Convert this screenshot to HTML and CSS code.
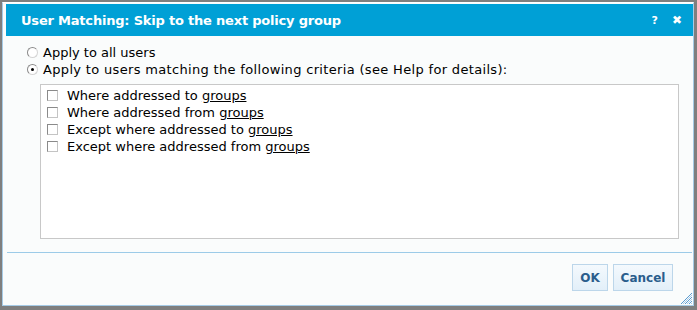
FILE: index.html
```html
<!DOCTYPE html>
<html>
<head>
<meta charset="utf-8">
<link rel="stylesheet" href="styles.css">
</head>
<body>
<div class="dialog">
  <div class="header">
    <span class="title">User Matching: Skip to the next policy group</span>
    <span class="tools"><span class="help">?</span><span class="close">&#x2716;</span></span>
  </div>
  <div class="content">
    <div class="radios">
      <div class="row"><span class="radio"></span><span>Apply to all users</span></div>
      <div class="row"><span class="radio checked"></span><span class="wide">Apply to users matching the following criteria (see Help for details):</span></div>
    </div>
    <div class="box">
      <div class="crow"><span class="check"></span><span>Where addressed to <u>groups</u></span></div>
      <div class="crow"><span class="check"></span><span>Where addressed from <u>groups</u></span></div>
      <div class="crow"><span class="check"></span><span>Except where addressed to <u>groups</u></span></div>
      <div class="crow"><span class="check"></span><span>Except where addressed from <u>groups</u></span></div>
    </div>
  </div>
  <div class="sep"></div>
  <div class="footer">
    <button class="btn ok">OK</button>
    <button class="btn cancel">Cancel</button>
  </div>
  <svg class="grip" width="13" height="13" viewBox="0 0 13 13">
    <path d="M12 1 L1 12 M12 5 L5 12 M12 9 L9 12" stroke="#5a9bd0" stroke-width="1" fill="none"/>
    <path d="M12 3 L3 12 M12 7 L7 12 M12 11 L11 12" stroke="#a9cbe8" stroke-width="1" fill="none"/>
  </svg>
</div>
</body>
</html>
```
FILE: styles.css
```css
html, body {
  margin: 0;
  padding: 0;
}
body {
  background: #7f7f7f;
  width: 697px;
  height: 310px;
  overflow: hidden;
  font-family: "DejaVu Sans", Verdana, sans-serif;
  font-size: 13px;
  color: #000;
}
.dialog {
  position: relative;
  box-sizing: border-box;
  margin: 2px 0 0 2px;
  width: 692px;
  height: 304px;
  border: 1px solid #a6cbe6;
  border-top-color: #ffffff;
  background: #fafcfc;
}
.header {
  margin: 1px 0 0 3px;
  height: 32px;
  background: #00a0d6;
  color: #fff;
  display: flex;
  align-items: center;
  justify-content: space-between;
  padding: 0 0 0 15px;
}
.title {
  font-weight: bold;
  font-size: 13px;
  letter-spacing: -0.2px;
}
.tools {
  display: flex;
  align-items: center;
  gap: 12px;
  padding-right: 11px;
  font-weight: bold;
}
.help {
  font-size: 11px;
  margin-right: 2px;
}
.close {
  font-size: 12px;
}
.content {
  padding: 8px 14px 0 24px;
}
.row {
  display: flex;
  align-items: center;
  height: 17px;
}
.wide {
  letter-spacing: 0.33px;
}
.radio {
  box-sizing: border-box;
  width: 11px;
  height: 11px;
  border-radius: 50%;
  border: 1px solid #8a8a8a;
  border-right-color: #d4d4d4;
  border-bottom-color: #d4d4d4;
  background: #fff;
  margin-right: 5px;
  margin-left: 0;
  position: relative;
}
.radio.checked::after {
  content: "";
  position: absolute;
  left: 3px;
  top: 3px;
  width: 3px;
  height: 3px;
  border-radius: 50%;
  background: #000;
}
.box {
  margin: 6px 0 0 13px;
  box-sizing: border-box;
  height: 155px;
  border: 1px solid #c8c8c8;
  background: #fff;
  padding: 2px 0 0 6px;
}
.crow {
  display: flex;
  align-items: center;
  height: 17px;
}
.check {
  box-sizing: border-box;
  width: 11px;
  height: 11px;
  border: 1px solid #8a8a8a;
  border-right-color: #c4c4c4;
  border-bottom-color: #c4c4c4;
  background: #fff;
  margin-right: 9px;
}
u {
  text-underline-offset: 1px;
}
.sep {
  margin: 13px 0 0 4px;
  height: 1px;
  background: #9ccbe8;
  margin-right: 1px;
}
.footer {
  display: flex;
  justify-content: flex-end;
  gap: 5px;
  padding: 11px 20px 0 0;
}
.btn {
  box-sizing: border-box;
  height: 27px;
  border: 1px solid #bcd6ea;
  background: linear-gradient(#f4f9fd, #e2eff9);
  color: #2a5d8c;
  font-family: "DejaVu Sans", Verdana, sans-serif;
  font-weight: bold;
  font-size: 12px;
  padding: 0;
}
.ok { width: 36px; }
.cancel { width: 60px; }
.grip {
  position: absolute;
  right: 0;
  bottom: 0;
}
```
